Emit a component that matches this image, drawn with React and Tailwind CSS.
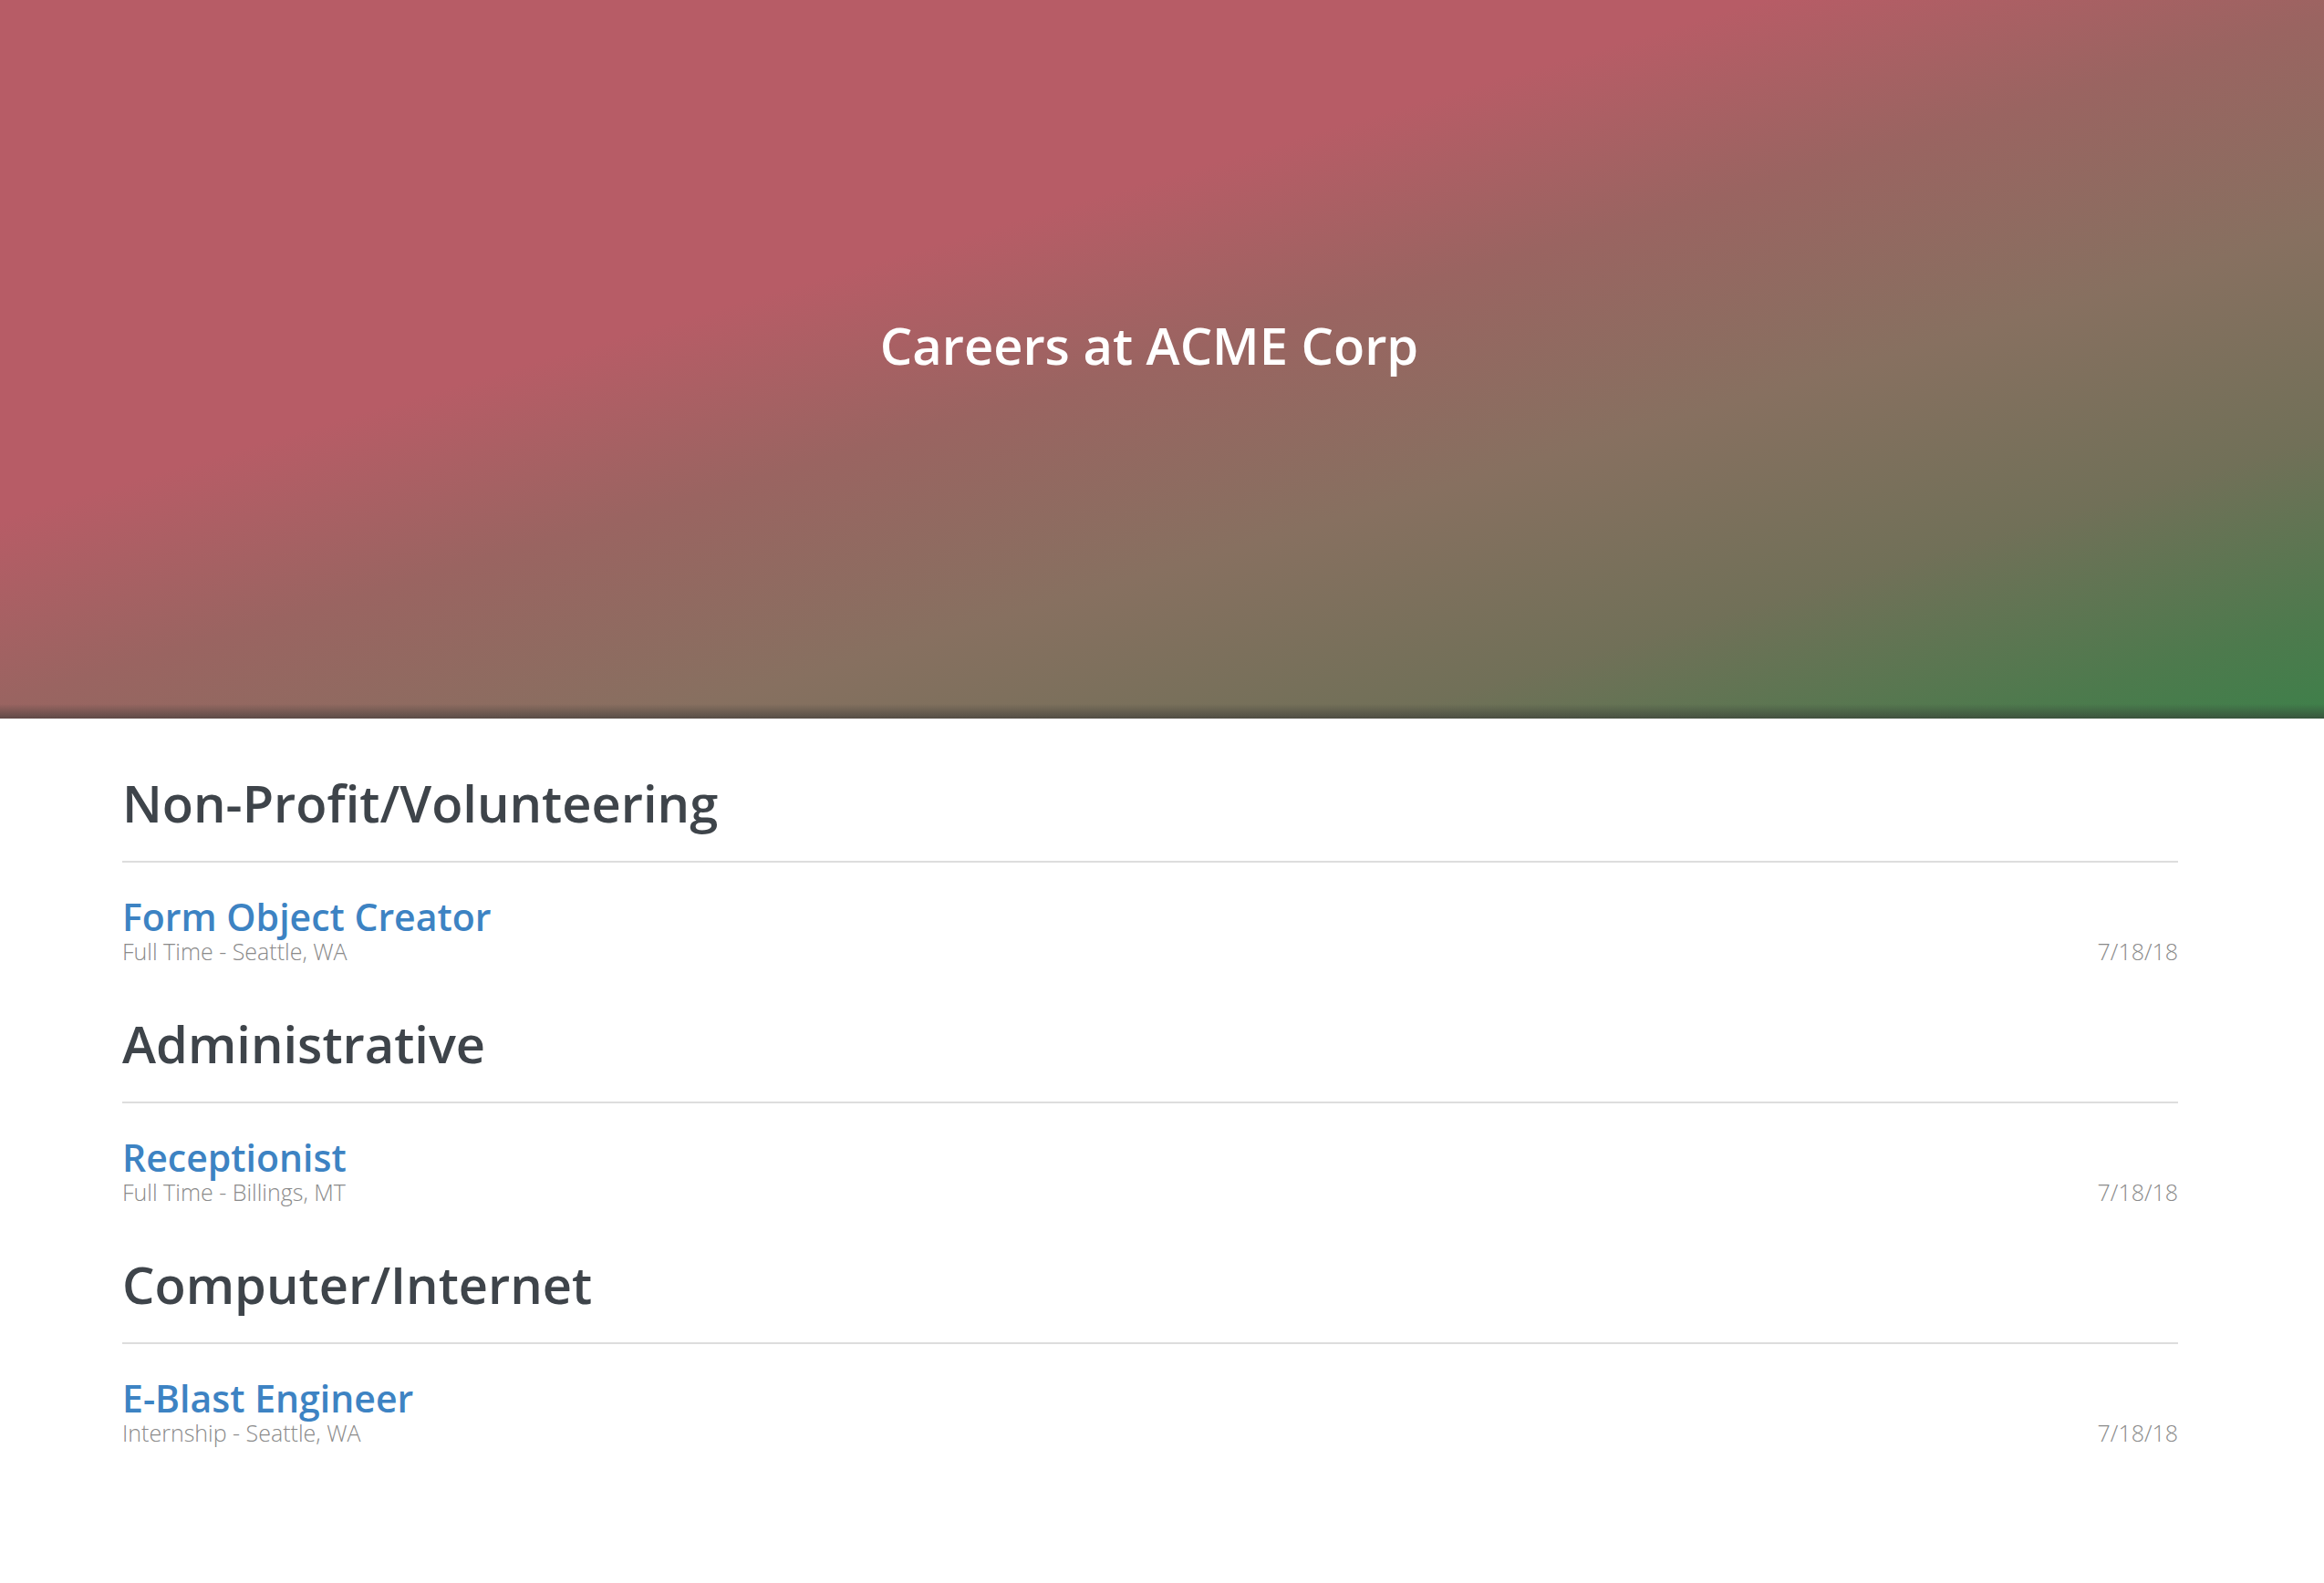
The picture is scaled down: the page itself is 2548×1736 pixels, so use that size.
import React from "react";

const sections = [
  {
    name: "Non-Profit/Volunteering",
    jobs: [{ title: "Form Object Creator", meta: "Full Time - Seattle, WA", date: "7/18/18" }],
  },
  {
    name: "Administrative",
    jobs: [{ title: "Receptionist", meta: "Full Time - Billings, MT", date: "7/18/18" }],
  },
  {
    name: "Computer/Internet",
    jobs: [{ title: "E-Blast Engineer", meta: "Internship - Seattle, WA", date: "7/18/18" }],
  },
];

export default function App() {
  return (
    <div className="min-h-[1736px] bg-white font-['Open_Sans',sans-serif]">
      <header className="h-[788px] w-full pt-[350px] pr-[28px] bg-[linear-gradient(to_bottom,transparent_calc(100%-16px),rgba(50,50,50,0.55)_100%),linear-gradient(163.6deg,#b75c66_0%,#b75c66_37%,#9a6461_50%,#877060_65%,#717058_80%,#4d7a4d_93%,#3e804a_100%)]">
        <h1 className="text-center text-[56px] leading-none font-semibold text-white">
          Careers at ACME Corp
        </h1>
      </header>
      <main className="ml-[134px] w-[2254px] pt-[64px]">
        {sections.map((s) => (
          <section key={s.name} className="h-[264px]">
            <h2 className="text-[56px] leading-none font-semibold text-[#3e444a]">{s.name}</h2>
            <div className="mt-[36px] h-[2px] bg-[#dddddd]" />
            {s.jobs.map((j) => (
              <div key={j.title} className="mt-[31px] flex items-end justify-between">
                <div className="flex flex-col">
                  <a className="text-[41px] leading-[56px] font-semibold text-[#3d83c3]">{j.title}</a>
                  <span className="text-[25px] leading-[20px] font-light text-[#8a8a8a]">{j.meta}</span>
                </div>
                <span className="text-[25px] leading-[20px] font-light text-[#8a8a8a]">{j.date}</span>
              </div>
            ))}
          </section>
        ))}
      </main>
    </div>
  );
}
